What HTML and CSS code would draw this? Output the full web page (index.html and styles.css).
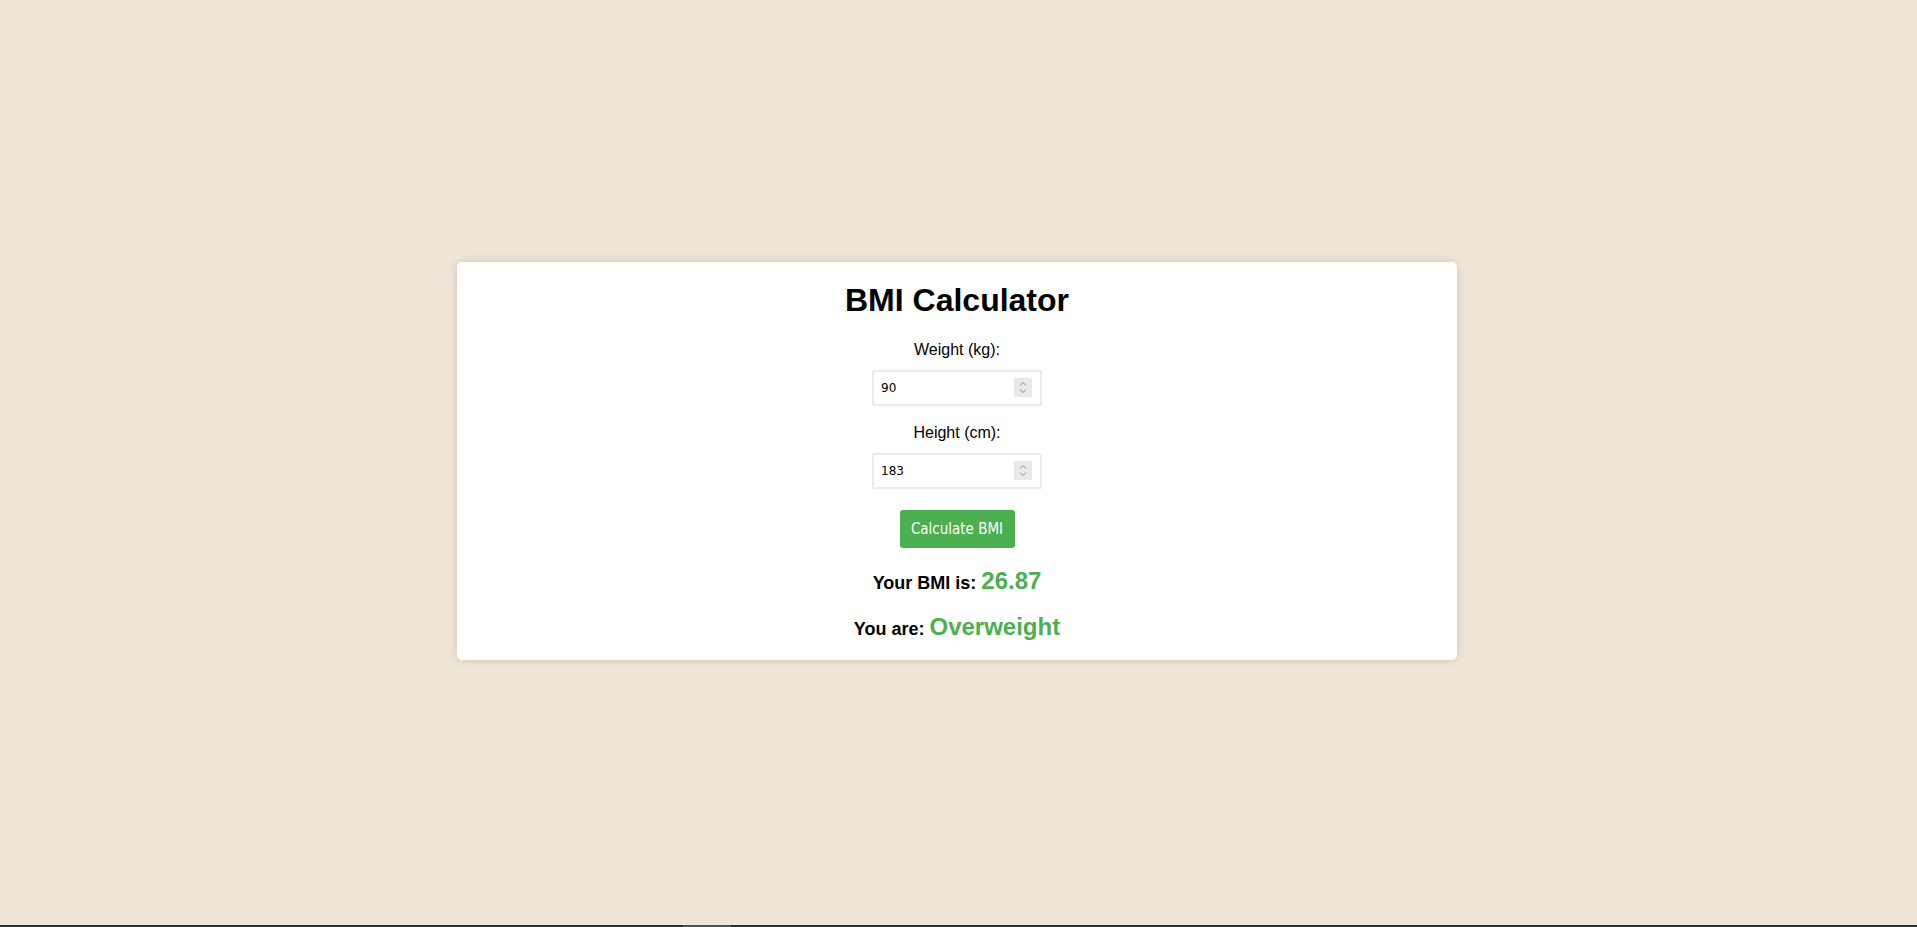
FILE: index.html
```html
<!DOCTYPE html>
<html lang="en">
<head>
<meta charset="utf-8">
<title>BMI Calculator</title>
<link rel="stylesheet" href="styles.css">
</head>
<body>
<div class="stage">
  <div class="card">
    <h1 class="title">BMI Calculator</h1>
    <label class="field-label" for="weight">Weight (kg):</label>
    <div class="input-wrap">
      <input class="num-input" id="weight" type="number" value="90">
      <span class="spinner"><svg width="18" height="19" viewBox="0 0 18 19"><path d="M6 7.5 L9 4.5 L12 7.5" fill="none" stroke="#8a8a8a" stroke-width="1"/><path d="M6 11.5 L9 14.5 L12 11.5" fill="none" stroke="#8a8a8a" stroke-width="1"/></svg></span>
    </div>
    <label class="field-label second" for="height">Height (cm):</label>
    <div class="input-wrap">
      <input class="num-input" id="height" type="number" value="183">
      <span class="spinner"><svg width="18" height="19" viewBox="0 0 18 19"><path d="M6 7.5 L9 4.5 L12 7.5" fill="none" stroke="#8a8a8a" stroke-width="1"/><path d="M6 11.5 L9 14.5 L12 11.5" fill="none" stroke="#8a8a8a" stroke-width="1"/></svg></span>
    </div>
    <button class="calc-btn" type="button">Calculate BMI</button>
    <p class="result first">Your BMI is: <span class="value">26.87</span></p>
    <p class="result">You are: <span class="value">Overweight</span></p>
  </div>
</div>
<div class="strip"><div class="strip-thumb"></div></div>
</body>
</html>
```
FILE: styles.css
```css
html, body {
  margin: 0;
  padding: 0;
}
body {
  height: 100vh;
  display: flex;
  flex-direction: column;
  background: #f0e6d8;
  font-family: "Liberation Sans", Arial, sans-serif;
  color: #000;
}
.stage {
  flex: 1;
  display: flex;
  align-items: center;
  justify-content: center;
  padding-right: 3px;
  padding-bottom: 3px;
}
.card {
  width: 1000px;
  box-sizing: border-box;
  background: #fff;
  border-radius: 5px;
  box-shadow: 0 0 10px rgba(0, 0, 0, 0.15);
  padding: 20px 20px 17px;
  display: flex;
  flex-direction: column;
  align-items: center;
}
.title {
  margin: 0 0 22px;
  font-size: 32px;
  line-height: 37px;
  font-weight: bold;
}
.field-label {
  display: block;
  font-size: 16px;
  line-height: 18px;
  margin-bottom: 11px;
}
.field-label.second {
  margin-top: 18px;
}
.input-wrap {
  position: relative;
  width: 170px;
  height: 36px;
}
.num-input {
  width: 170px;
  height: 36px;
  box-sizing: border-box;
  margin: 0;
  padding: 0 7px;
  border: 2px solid #ececec;
  border-radius: 3px;
  box-shadow: 0 0 1px rgba(0, 0, 0, 0.12);
  font-family: "DejaVu Sans", Verdana, sans-serif;
  font-size: 12px;
  color: #000;
  background: #fff;
  outline: none;
  -moz-appearance: textfield;
}
.num-input::-webkit-outer-spin-button,
.num-input::-webkit-inner-spin-button {
  -webkit-appearance: none;
  margin: 0;
}
.spinner {
  position: absolute;
  right: 10px;
  top: 8px;
  width: 18px;
  height: 19px;
  background: #e9e9ec;
  display: block;
}
.spinner svg {
  display: block;
}
.calc-btn {
  margin-top: 21px;
  width: 115px;
  height: 38px;
  padding: 0;
  border: none;
  border-radius: 3px;
  background: #4caf50;
  color: #fff;
  font-family: "DejaVu Sans Condensed", "Liberation Sans", sans-serif;
  font-size: 15px;
  cursor: pointer;
}
.result {
  margin: 16px 0 0;
  font-size: 18px;
  font-weight: bold;
  line-height: 28px;
}
.result.first {
  margin-top: 19px;
}
.value {
  font-size: 24px;
  color: #4caf50;
}
.strip {
  height: 2px;
  background: #263238;
  flex: none;
}
.strip-thumb {
  width: 48px;
  height: 2px;
  margin-left: 683px;
  background: #4b5457;
}
```
